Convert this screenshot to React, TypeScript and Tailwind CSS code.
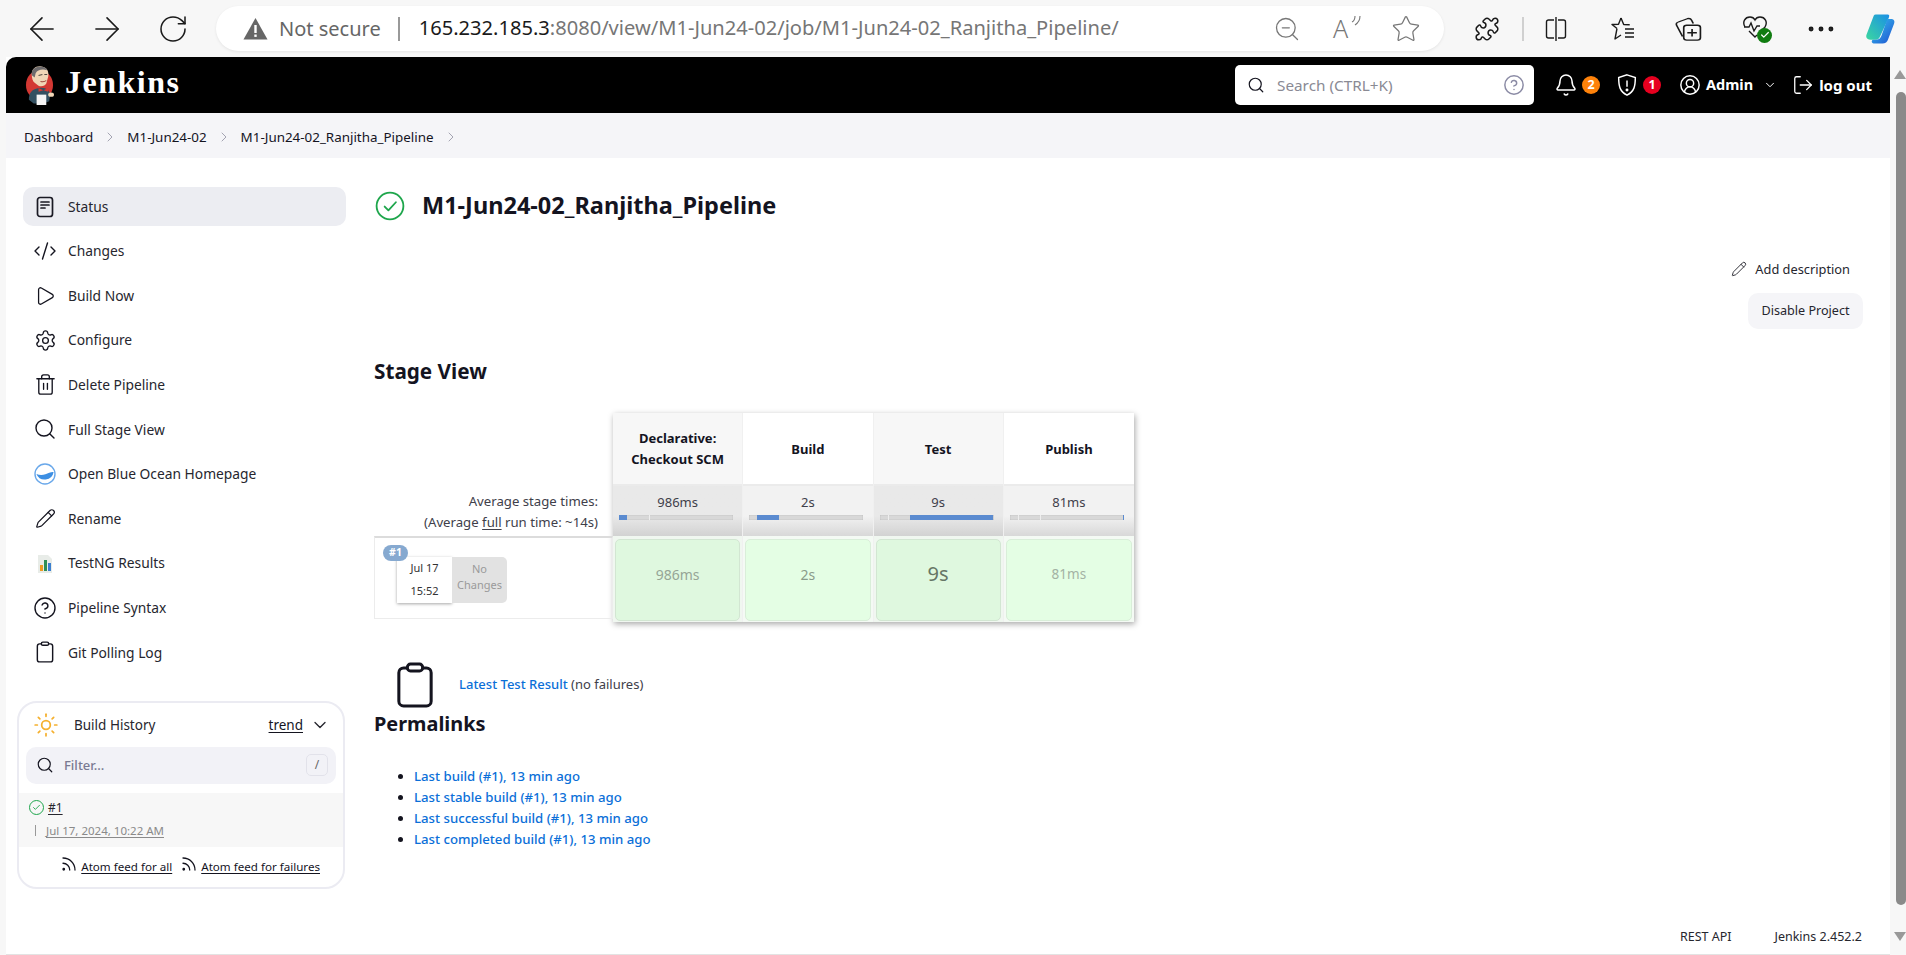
import React from "react";
import { ArrowLeft, ArrowRight, RotateCw, ZoomOut, Star, Puzzle, MoreHorizontal, Search, CircleHelp, Bell, CircleUserRound, ChevronDown, LogOut, ChevronRight, CodeXml, Play, Settings, Trash2, Pencil, Sun, Rss, Check } from "lucide-react";

const font = "font-['Noto_Sans','Open_Sans',sans-serif]";

function StatusIcon() {
  return (
    <svg width="20" height="22" viewBox="0 0 20 22" fill="none" stroke="#1a1a24" strokeWidth="1.7" strokeLinecap="round">
      <rect x="2.5" y="1.500" width="15" height="19" rx="2.5" />
      <path d="M6 6h8M6 9h8M6 12h4" />
    </svg>
  );
}
function ClipboardIcon({ w, h, sw }: { w: number; h: number; sw: number }) {
  return (
    <svg width={w} height={h} viewBox="0 0 20 24" fill="none" stroke="#14141f" strokeWidth={sw}>
      <rect x="1.5" y="3" width="17" height="20" rx="2.5" />
      <rect x="6" y="1" width="8" height="3.6" rx="1.6" fill="#fff" />
    </svg>
  );
}
function OceanIcon() {
  return (
    <svg width="22" height="22" viewBox="0 0 22 22">
      <circle cx="11" cy="11" r="10" fill="#fff" stroke="#6aa8ea" strokeWidth="1.4" />
      <path d="M2.4 11c3 1.2 6 1.4 9 .2 3-1.3 6-2.6 8.2-2.2A9 9 0 0 1 2.4 11z" fill="#3d8fe3" />
    </svg>
  );
}
function TestNgIcon() {
  return (
    <svg width="16" height="19" viewBox="0 0 16 19">
      <path d="M1 1h10l4 4v14H1z" fill="#e8ece8" />
      <rect x="3" y="11" width="3" height="6" fill="#ee9b21" />
      <rect x="7" y="6" width="3" height="11" fill="#2f8f55" />
      <rect x="11" y="9" width="3" height="8" fill="#3c7fd0" />
    </svg>
  );
}
function JenkinsLogo() {
  return (
    <svg width="29" height="40" viewBox="0 0 30 54" preserveAspectRatio="none">
      <ellipse cx="15" cy="27" rx="14" ry="20" fill="#d33833" />
      <path d="M4 47c0-9 3-15 11-16 7-1 11 4 11 10l-1 8-6 3H9z" fill="#335061" />
      <path d="M7 13C7 5 11 1 17 2c6 1 8 7 7 14l-2 9c-1 3-5 5-8 3l-4-4C8 22 7 17 7 13z" fill="#f0d6b7" />
      <path d="M7 14C6 6 11 1 17 2c3 1 5 2 6 5-6-2-10 0-12 4l-1 6z" fill="#6d6b6d" />
      <path d="M14 14l4-1M20 13l3 0" stroke="#231f20" strokeWidth="1.2" />
      <path d="M16 22c2 1 4 1 6-1" stroke="#a0453d" strokeWidth="1.2" fill="none" />
      <path d="M14 31l5 3 5-3v5l-5-2-5 2z" fill="#d33833" />
      <rect x="12" y="40" width="10" height="14" fill="#f5f5f5" />
      <circle cx="27" cy="40" r="3" fill="#f0d6b7" />
    </svg>
  );
}
function SplitIcon() {
  return (
    <svg width="24" height="26" viewBox="0 0 24 26" fill="none" stroke="#1a1a1a" strokeWidth="1.4">
      <path d="M10 4H4.5A2 2 0 0 0 2.5 6v14a2 2 0 0 0 2 2H10M14 4h5.500a2 2 0 0 1 2 2v14a2 2 0 0 1-2 2H14M12 1v24" />
    </svg>
  );
}
function FavListIcon() {
  return (
    <svg width="26" height="26" viewBox="0 0 26 26" fill="none" stroke="#1a1a1a" strokeWidth="1.4" strokeLinejoin="round">
      <path d="M11 2l2.700 6.500 6 .3M7 12.500L2 8.500l6.500-.3L11 2M7 12.500L5 23l6-4M15 13h9M15 17h9M15 21h9" />
    </svg>
  );
}
function CollectionIcon() {
  return (
    <svg width="31" height="28" viewBox="0 0 26 30" preserveAspectRatio="none" fill="none" stroke="#1a1a1a" strokeWidth="1.4">
      <path d="M8 23L3 11c-.6-1.500 0-3 1.500-3.500L12 4c1.500-.5 3 0 3.600 1.500L17 9" />
      <rect x="9" y="11" width="14" height="16" rx="2.500" fill="#f7f7f7" />
      <path d="M16 15v8M12 19h8" />
    </svg>
  );
}
function HealthIcon() {
  return (
    <span className="relative flex h-[28px] w-[30px] items-start">
      <svg width="26" height="24" viewBox="0 0 26 24" fill="none" stroke="#1a1a1a" strokeWidth="1.4">
        <path d="M3 12C0 7 3 2 8 2c2 0 4 1 5 3 1-2 3-3 5-3 5 0 8 5 5 10l-5 5M2 12h5l2-4 3 8 3-5h3M7 16l6 6 2-2" />
      </svg>
      <span className="absolute bottom-0 right-0 flex h-[15px] w-[15px] items-center justify-center rounded-full bg-[#107c10]">
        <Check size={10} color="#fff" strokeWidth={3} />
      </span>
    </span>
  );
}
function CopilotIcon() {
  return (
    <svg width="29" height="32" viewBox="0 0 30 42" preserveAspectRatio="none">
      <defs>
        <linearGradient id="cpa" x1="0" y1="1" x2="1" y2="0">
          <stop offset="0" stopColor="#3bd7a0" />
          <stop offset="1" stopColor="#1a8fe6" />
        </linearGradient>
        <linearGradient id="cpb" x1="0" y1="0" x2="1" y2="1">
          <stop offset="0" stopColor="#37c6f0" />
          <stop offset="1" stopColor="#1f4fd0" />
        </linearGradient>
      </defs>
      <path d="M10 2h12c3 0 2 3 1 6l-9 24c-1 2-2 3-5 3H5C1 35-1 32 1 27l6-20c1-3 1-5 3-5z" fill="url(#cpa)" />
      <path d="M22 8h4c3 0 4 3 3 6l-6 20c-1 4-3 6-6 6H9c-3 0-4-3-2-5h4c3 0 4-2 5-5z" fill="url(#cpb)" />
    </svg>
  );
}

function BrowserChrome() {
  return (
    <div className="flex h-[57px] shrink-0 items-start bg-[#f7f7f7]">
      <div className="flex h-[57px] w-[216px] items-center pl-[23px] text-[#1a1a1a]">
        <ArrowLeft size={38} strokeWidth={1} />
        <ArrowRight size={38} strokeWidth={1} className="ml-[27px]" />
        <RotateCw size={32} strokeWidth={1.15} className="ml-[31px]" />
      </div>
      <div className="mt-[6px] flex h-[45px] w-[1228px] items-center rounded-full bg-white pl-[27px] pr-[21px] shadow-[0_1px_3px_rgba(0,0,0,0.08)]">
        <svg width="25" height="23" viewBox="0 0 25 23">
          <path d="M12.500 1L24.500 22.500H.5z" fill="#666" />
          <rect x="11.300" y="8" width="2.400" height="8" fill="#fff" />
          <rect x="11.300" y="17.500" width="2.400" height="2.400" fill="#fff" />
        </svg>
        <span className="ml-[11px] text-[20px] text-[#666]">Not secure</span>
        <span className="ml-[17px] mr-[19px] h-[24px] w-[2px] bg-[#999]" />
        <span className="text-[20.100px] text-[#1a1a1a]">165.232.185.3<span className="text-[#767676]">:8080/view/M1-Jun24-02/job/M1-Jun24-02_Ranjitha_Pipeline/</span></span>
        <span className="ml-auto mr-[2px] flex items-center gap-[32px] text-[#777]">
          <ZoomOut size={28} strokeWidth={1.1} />
          <span className="relative flex h-[26px] w-[26px] items-center text-[25px] font-light leading-none">
            A
            <svg width="10" height="12" viewBox="0 0 10 12" fill="none" stroke="#777" strokeWidth="1.1" className="absolute -right-[2px] -top-[1px]">
              <path d="M1 7c2-1 3-3 3-6M4 10c3-2 5-5 5-9" />
            </svg>
          </span>
          <Star size={30} strokeWidth={1} />
        </span>
      </div>
      <div className="flex h-[57px] flex-1 items-center pl-[30px] text-[#1a1a1a]">
        <Puzzle size={26} strokeWidth={1.4} />
        <span className="ml-[22px] mr-[20px] h-[24px] w-[2px] bg-[#d0d0d0]" />
        <SplitIcon />
        <span className="ml-[42px]"><FavListIcon /></span>
        <span className="ml-[37px]"><CollectionIcon /></span>
        <span className="ml-[38px]"><HealthIcon /></span>
        <span className="ml-[32px]"><MoreHorizontal size={34} strokeWidth={1.5} /></span>
        <span className="ml-[28px]"><CopilotIcon /></span>
      </div>
    </div>
  );
}

function JenkinsHeader() {
  return (
    <header className="flex h-[56px] shrink-0 items-center rounded-tl-[10px] bg-black pl-[19px] pr-[18px] text-white">
      <JenkinsLogo />
      <span className="ml-[11px] pb-[6px] font-['Liberation_Serif',serif] text-[32px] font-bold leading-none tracking-[1.5px]">Jenkins</span>
      <div className="ml-auto flex h-[40px] w-[299px] items-center rounded-[5px] bg-white pl-[12px] pr-[9px]">
        <Search size={18} color="#14141f" strokeWidth={1.6} />
        <span className="ml-[12px] text-[15.300px] text-[#8a8a94]">Search (CTRL+K)</span>
        <CircleHelp size={22} color="#8b8ba5" strokeWidth={1.6} className="ml-auto" />
      </div>
      <Bell size={24} strokeWidth={1.5} className="ml-[20px]" />
      <span className="ml-[4px] flex h-[18px] w-[18px] items-center justify-center rounded-full bg-[#fe820a] text-[12.500px] font-bold">2</span>
      <svg width="24" height="24" viewBox="0 0 24 26" fill="none" stroke="#fff" strokeWidth="1.6" className="ml-[15px]">
        <path d="M12 2l9 3c0 9-1 15-9 19C4 20 3 14 3 5zM12 8v7" />
        <circle cx="12" cy="18.500" r="0.8" fill="#fff" />
      </svg>
      <span className="ml-[4px] flex h-[18px] w-[18px] items-center justify-center rounded-full bg-[#e6001f] text-[12.500px] font-bold">1</span>
      <CircleUserRound size={22} strokeWidth={1.6} className="ml-[18px]" />
      <span className="ml-[5px] text-[14.500px] font-bold">Admin</span>
      <ChevronDown size={14} strokeWidth={1.7} className="ml-[10px]" />
      <LogOut size={22} strokeWidth={1.4} className="ml-[15px]" />
      <span className="ml-[5px] text-[15px] font-bold">log out</span>
    </header>
  );
}

function Breadcrumb() {
  const items = ["Dashboard", "M1-Jun24-02", "M1-Jun24-02_Ranjitha_Pipeline"];
  return (
    <nav className="flex h-[45px] shrink-0 items-center bg-[#f5f5f8] pl-[18px] pt-[3px] text-[13.400px] text-[#14141f]">
      {items.map((t) => (
        <React.Fragment key={t}>
          <span>{t}</span>
          <ChevronRight size={16} color="#8f8f9f" strokeWidth={1.2} className="mx-[9px]" />
        </React.Fragment>
      ))}
    </nav>
  );
}

const menu: { label: string; icon: React.ReactNode; active?: boolean }[] = [
  { label: "Status", icon: <StatusIcon />, active: true },
  { label: "Changes", icon: <CodeXml size={24} strokeWidth={1.4} /> },
  { label: "Build Now", icon: <Play size={22} strokeWidth={1.4} /> },
  { label: "Configure", icon: <Settings size={23} strokeWidth={1.4} /> },
  { label: "Delete Pipeline", icon: <Trash2 size={23} strokeWidth={1.4} /> },
  { label: "Full Stage View", icon: <Search size={24} strokeWidth={1.4} /> },
  { label: "Open Blue Ocean Homepage", icon: <OceanIcon /> },
  { label: "Rename", icon: <Pencil size={21} strokeWidth={1.4} /> },
  { label: "TestNG Results", icon: <TestNgIcon /> },
  { label: "Pipeline Syntax", icon: <CircleHelp size={24} strokeWidth={1.4} /> },
  { label: "Git Polling Log", icon: <ClipboardIcon w={18} h={22} sw={1.6} /> },
];

function Sidebar() {
  return (
    <aside className="flex w-[334px] shrink-0 flex-col pl-[11px] pt-[29px]">
      <ul className="ml-[6px] flex w-[323px] flex-col gap-[5.6px]">
        {menu.map((m) => (
          <li key={m.label} className={`flex h-[39px] items-center rounded-[10px] pl-[10px] text-[13.800px] text-[#26262e] ${m.active ? "bg-[#ecedf2]" : ""}`}>
            <span className="flex w-[24px] items-center justify-center text-[#14141f]">{m.icon}</span>
            <span className="ml-[11px] pt-[1px]">{m.label}</span>
          </li>
        ))}
      </ul>
      <section className="mt-[29px] flex h-[188px] w-[328px] flex-col overflow-hidden rounded-[20px] border-2 border-[#ebebf2]">
        <div className="flex h-[44px] shrink-0 items-center pl-[14px] pr-[13px] text-[13.500px] text-[#26262e]">
          <Sun size={26} color="#f5b02e" strokeWidth={1.6} />
          <span className="ml-[15px]">Build History</span>
          <span className="ml-auto text-[#14141f] underline underline-offset-2">trend</span>
          <ChevronDown size={20} strokeWidth={1.6} className="ml-[7px]" />
        </div>
        <div className="mx-[7px] flex h-[37px] shrink-0 items-center rounded-[10px] bg-[#f2f2f7] pl-[10px] pr-[8px]">
          <Search size={18} color="#14141f" strokeWidth={1.6} />
          <span className="ml-[10px] text-[13px] font-medium text-[#7a7a92]">Filter...</span>
          <span className="ml-auto flex h-[22px] w-[22px] items-center justify-center rounded-[5px] border border-[#e2e2ea] text-[12px] text-[#666]">/</span>
        </div>
        <div className="mt-[9px] flex h-[54px] shrink-0 flex-col bg-[#f7f7f7] pl-[10px] pt-[7px]">
          <div className="flex items-center">
            <span className="flex h-[15px] w-[15px] items-center justify-center rounded-full border border-[#1ea64c]">
              <Check size={9} color="#1ea64c" strokeWidth={2.4} />
            </span>
            <span className="ml-[4px] text-[12px] leading-[16px] text-[#26262e] underline underline-offset-2">#1</span>
          </div>
          <div className="mt-[7px] flex items-center pl-[6px] text-[11.500px] leading-[15px] text-[#8a8a8a]">
            <span className="h-[11px] w-px bg-[#999]" />
            <span className="ml-[10px] underline underline-offset-2">Jul 17, 2024, 10:22 AM</span>
          </div>
        </div>
        <div className="flex flex-1 items-center justify-end pr-[23px] text-[11.600px] text-[#14141f]">
          <Rss size={18} strokeWidth={1.7} className="-translate-y-[3px]" />
          <span className="ml-[3px] underline underline-offset-2">Atom feed for all</span>
          <Rss size={18} strokeWidth={1.7} className="ml-[8px] -translate-y-[3px]" />
          <span className="ml-[3px] underline underline-offset-2">Atom feed for failures</span>
        </div>
      </section>
    </aside>
  );
}

const stages = [
  { name: ["Declarative:", "Checkout SCM"], avg: "986ms", odd: true, bar: "left-0 w-[8px]", ticks: ["left-[30px]"], cell: "text-[14px] text-[#96a596]" },
  { name: ["Build"], avg: "2s", odd: false, bar: "left-[8px] w-[22px]", ticks: ["left-[8px]"], cell: "text-[14px] text-[#8a9b8a]" },
  { name: ["Test"], avg: "9s", odd: true, bar: "left-[30px] w-[83px]", ticks: ["left-[8px]"], cell: "text-[20px] text-[#667666]" },
  { name: ["Publish"], avg: "81ms", odd: false, bar: "right-0 w-px", ticks: ["left-[8px]", "left-[30px]"], cell: "text-[13.500px] text-[#a3b2a3]" },
];

function StageView() {
  return (
    <div className="mt-[26px] flex h-[212px] items-start">
      <div className="flex w-[239px] shrink-0 flex-col pt-[71px]">
        <div className="flex h-[52px] flex-col justify-center pr-[15px] pt-[4px] text-right text-[13.200px] leading-[21px] text-[#40404a]">
          <span>Average stage times:</span>
          <span>(Average <span className="underline underline-offset-2">full</span> run time: ~14s)</span>
        </div>
        <div className="relative h-[83px] border border-t-2 border-[#ececec] border-t-[#dcdcdc]">
          <span className="absolute left-[8px] top-[7px] z-10 flex h-[16px] w-[25px] items-center justify-center rounded-full bg-[#86a9d0] text-[10.500px] font-bold text-white">#1</span>
          <div className="ml-[22px] mt-[19px] flex h-[46px]">
            <div className="flex w-[55px] flex-col items-center justify-center gap-[9px] bg-white pb-[1px] text-[11px] leading-[14px] text-[#333] shadow-[0_1px_3px_rgba(0,0,0,0.35)]">
              <span>Jul 17</span>
              <span>15:52</span>
            </div>
            <div className="flex w-[55px] flex-col items-center justify-center rounded-r-[5px] bg-[#e2e2e2] pb-[6px] text-[11px] leading-[16px] text-[#9a9a9a]">
              <span>No</span>
              <span>Changes</span>
            </div>
          </div>
        </div>
      </div>
      <div className="grid w-[521px] shrink-0 grid-cols-4 shadow-[1px_2px_6px_rgba(0,0,0,0.35)]">
        {stages.map((s) => (
          <div key={s.avg} className={`flex flex-col border-r border-[#f0f0f0] last:border-r-0 ${s.odd ? "bg-[#f7f7f7]" : "bg-white"}`}>
            <div className="flex h-[71px] flex-col items-center justify-center pt-[1px] text-[13px] font-bold leading-[21px] text-[#14141f]">
              {s.name.map((n) => <span key={n}>{n}</span>)}
            </div>
            <div className={`flex h-[52px] flex-col items-center border-t-2 border-[#ebebeb] pt-[7px] ${s.odd ? "bg-linear-to-b from-[#e9e9e9] from-60% to-[#d2d2d2]" : "bg-linear-to-b from-[#f2f2f2] from-60% to-[#d8d8d8]"}`}>
              <span className="text-[13px] leading-[18px] text-[#40404a]">{s.avg}</span>
              <div className="relative ml-[6px] mt-[4px] h-[5px] w-[114px] self-start bg-[#d8d8d8] shadow-[inset_0_0_1px_rgba(0,0,0,0.35)]">
                {s.ticks.map((t) => <span key={t} className={`absolute top-0 h-full w-px bg-[#eeeeee] ${t}`} />)}
                <span className={`absolute top-0 h-full bg-[#5b8bd0] ${s.bar}`} />
              </div>
            </div>
            <div className={`h-[86px] px-[2px] pb-[1px] pt-[3px] ${s.odd ? "bg-[#f0f7f0]" : "bg-[#f4faf4]"}`}>
              <div className={`flex h-[82px] items-center justify-center rounded-[5px] border pb-[12px] ${s.odd ? "border-[#d2e6d2] bg-[#dff8df]" : "border-[#d9eed9] bg-[#e4fee4]"} ${s.cell}`}>{s.avg}</div>
            </div>
          </div>
        ))}
      </div>
    </div>
  );
}

function Main() {
  return (
    <main className="flex min-w-0 flex-1 flex-col pl-[34px] pr-[27px]">
      <div className="flex h-[98px] shrink-0 items-center pb-[2px]">
        <svg width="30" height="30" viewBox="0 0 28 28" fill="none" stroke="#1ea64c" strokeWidth="1.7" className="ml-[1px]">
          <circle cx="14" cy="14" r="12.500" />
          <path d="M9 14.500l3.500 3.500 7-7.500" strokeLinecap="round" strokeLinejoin="round" />
        </svg>
        <h1 className="ml-[17px] text-[23.500px] font-bold text-[#14141f]">M1-Jun24-02_Ranjitha_Pipeline</h1>
      </div>
      <div className="mt-[4px] flex flex-col items-end">
        <div className="flex items-center pr-[13px] text-[12.800px] leading-[18px] text-[#26262e]">
          <Pencil size={16} strokeWidth={1.4} />
          <span className="ml-[8px]">Add description</span>
        </div>
        <div className="mt-[15px] flex h-[36px] w-[115px] items-center justify-center rounded-[10px] bg-[#f5f5f8] pt-[1px] text-[12.600px] text-[#26262e]">Disable Project</div>
      </div>
      <h2 className="mt-[27px] text-[20.700px] font-bold leading-[30px] text-[#14141f]">Stage View</h2>
      <div className="pt-[1px]"><StageView /></div>
      <div className="mt-[37px] flex h-[48px] shrink-0 items-start pl-[22px]">
        <ClipboardIcon w={38} h={46} sw={1.6} />
        <p className="ml-[25px] mt-[12px] text-[13px] leading-[20px] text-[#40404a]">
          <span className="font-medium text-[#0b6fd8]">Latest Test Result</span> (no failures)
        </p>
      </div>
      <h2 className="text-[19.900px] font-bold leading-[28px] text-[#14141f]">Permalinks</h2>
      <ul className="mt-[28px] flex flex-col pl-[40px] text-[13.200px] font-medium leading-[21px] text-[#0b6fd8]">
        {["Last build (#1), 13 min ago", "Last stable build (#1), 13 min ago", "Last successful build (#1), 13 min ago", "Last completed build (#1), 13 min ago"].map((t) => (
          <li key={t} className="list-disc marker:text-[#14141f]">{t}</li>
        ))}
      </ul>
      <div className="-mr-[26px] mt-auto flex h-[34px] items-center justify-end gap-[43px] pr-[27px] text-[12.500px] text-[#26262e]">
        <span>REST API</span>
        <span>Jenkins 2.452.2</span>
      </div>
    </main>
  );
}

function Scrollbar() {
  return (
    <div className="flex w-[16px] shrink-0 flex-col items-end bg-[#f7f7f7]">
      <span className="mt-[13px] h-0 w-0 border-x-[6px] border-b-[9px] border-x-transparent border-b-[#999]" />
      <span className="mt-[13px] h-[813px] w-[10px] rounded-[5px] bg-[#8a8a8a]" />
      <span className="mt-[27px] h-0 w-0 border-x-[6px] border-t-[9px] border-x-transparent border-t-[#999]" />
    </div>
  );
}

export default function App() {
  return (
    <div className={`flex h-[955px] w-[1906px] flex-col overflow-hidden bg-[#f7f7f7] ${font}`}>
      <BrowserChrome />
      <div className="flex min-h-0 flex-1 pl-[6px]">
        <div className="flex min-w-0 flex-1 flex-col border-b border-[#e3e3e3] bg-white">
          <JenkinsHeader />
          <Breadcrumb />
          <div className="flex min-h-0 flex-1">
            <Sidebar />
            <Main />
          </div>
        </div>
        <Scrollbar />
      </div>
    </div>
  );
}
